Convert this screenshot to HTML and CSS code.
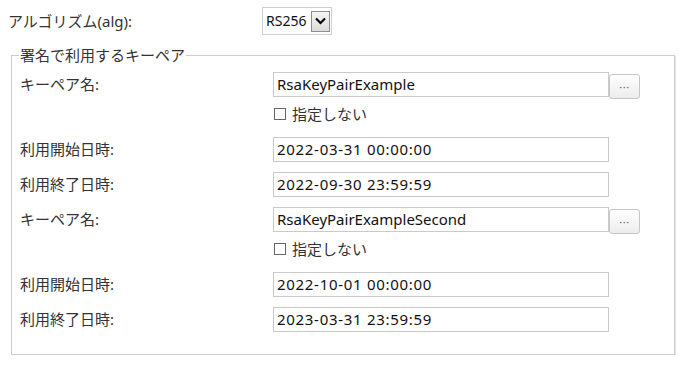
FILE: index.html
```html
<!DOCTYPE html>
<html lang="ja">
<head>
<meta charset="utf-8">
<title>署名キーペア</title>
<link rel="stylesheet" href="styles.css">
</head>
<body>
  <div class="alg-row">
    <span class="alg-label">アルゴリズム(alg):</span>
    <div class="select">
      <span class="select-value">RS256</span>
      <span class="select-btn">
        <svg width="11" height="8" viewBox="0 0 11 8"><path d="M1 1.5 L5.5 6 L10 1.5" fill="none" stroke="#000" stroke-width="2.2"/></svg>
      </span>
    </div>
  </div>

  <fieldset class="keypairs">
    <legend class="keypairs-legend">署名で利用するキーペア</legend>

    <div class="field key-field">
      <span class="field-label">キーペア名:</span>
      <div class="field-control">
        <div class="input-group">
          <span class="text-input">RsaKeyPairExample</span>
          <span class="browse-btn">···</span>
        </div>
        <div class="check"><span class="check-box"></span>指定しない</div>
      </div>
    </div>
    <div class="field">
      <span class="field-label">利用開始日時:</span>
      <div class="field-control"><span class="text-input date">2022-03-31 00:00:00</span></div>
    </div>
    <div class="field">
      <span class="field-label">利用終了日時:</span>
      <div class="field-control"><span class="text-input date">2022-09-30 23:59:59</span></div>
    </div>

    <div class="field key-field">
      <span class="field-label">キーペア名:</span>
      <div class="field-control">
        <div class="input-group">
          <span class="text-input">RsaKeyPairExampleSecond</span>
          <span class="browse-btn">···</span>
        </div>
        <div class="check"><span class="check-box"></span>指定しない</div>
      </div>
    </div>
    <div class="field">
      <span class="field-label">利用開始日時:</span>
      <div class="field-control"><span class="text-input date">2022-10-01 00:00:00</span></div>
    </div>
    <div class="field">
      <span class="field-label">利用終了日時:</span>
      <div class="field-control"><span class="text-input date">2023-03-31 23:59:59</span></div>
    </div>
  </fieldset>
</body>
</html>
```

FILE: styles.css
```css
* { box-sizing: border-box; }

html, body {
  margin: 0;
  padding: 0;
  background: #fff;
}

body {
  font-family: "Noto Sans", "Noto Sans CJK JP", sans-serif;
  font-size: 15px;
  color: #333;
  padding-top: 7px;
  width: 688px;
}

.alg-row {
  display: flex;
  align-items: center;
  height: 28px;
  padding-left: 8px;
}

.alg-label {
  width: 254px;
  line-height: 20px;
}

.select {
  display: flex;
  align-items: center;
  width: 70px;
  height: 28px;
  border: 1px solid #cfcfcf;
  background: #fff;
  padding-left: 3px;
}

.select-value {
  flex: 1;
  color: #111;
  font-size: 14px;
  line-height: 20px;
}

.select-btn {
  width: 19px;
  height: 21px;
  margin-right: 1px;
  border: 1px solid #8e8e8e;
  background: linear-gradient(#f4f4f4, #dcdcdc);
  display: flex;
  align-items: center;
  justify-content: center;
}

.keypairs {
  margin: 10px 13px 0 11px;
  padding: 6px 0 12px 8px;
  border: 1px solid #cdcdcd;
  box-shadow: 1px 1px 0 #e4e4e4;
  min-width: 0;
}

.keypairs-legend {
  padding: 0 1px;
  line-height: 20px;
  color: #333;
  margin-left: -1px;
}

.field {
  display: grid;
  grid-template-columns: 253px auto;
  margin-bottom: 10px;
}

.key-field {
  margin-top: 1px;
}

.field-label {
  line-height: 25px;
}

.field-control {
  display: flex;
  flex-direction: column;
}

.input-group {
  display: flex;
  align-items: flex-start;
}

.text-input {
  display: block;
  width: 336px;
  height: 25px;
  border: 1px solid #cacaca;
  padding: 0 3px;
  line-height: 23px;
  color: #111;
  background: #fff;
}

.text-input.date {
  letter-spacing: 0.7px;
}

.browse-btn {
  width: 31px;
  height: 25px;
  margin-top: 2px;
  border: 1px solid #c6c6c6;
  border-radius: 3px;
  background: linear-gradient(#ffffff, #ececec);
  font-size: 11px;
  color: #666;
  letter-spacing: 0.5px;
  display: flex;
  align-items: center;
  justify-content: center;
  line-height: 1;
}

.check {
  display: flex;
  align-items: center;
  height: 26px;
  margin-top: 2px;
  line-height: 20px;
  color: #333;
}

.check-box {
  width: 12px;
  height: 12px;
  border: 1px solid #666;
  margin: 0 6px 0 1px;
  background: #fff;
}
```
